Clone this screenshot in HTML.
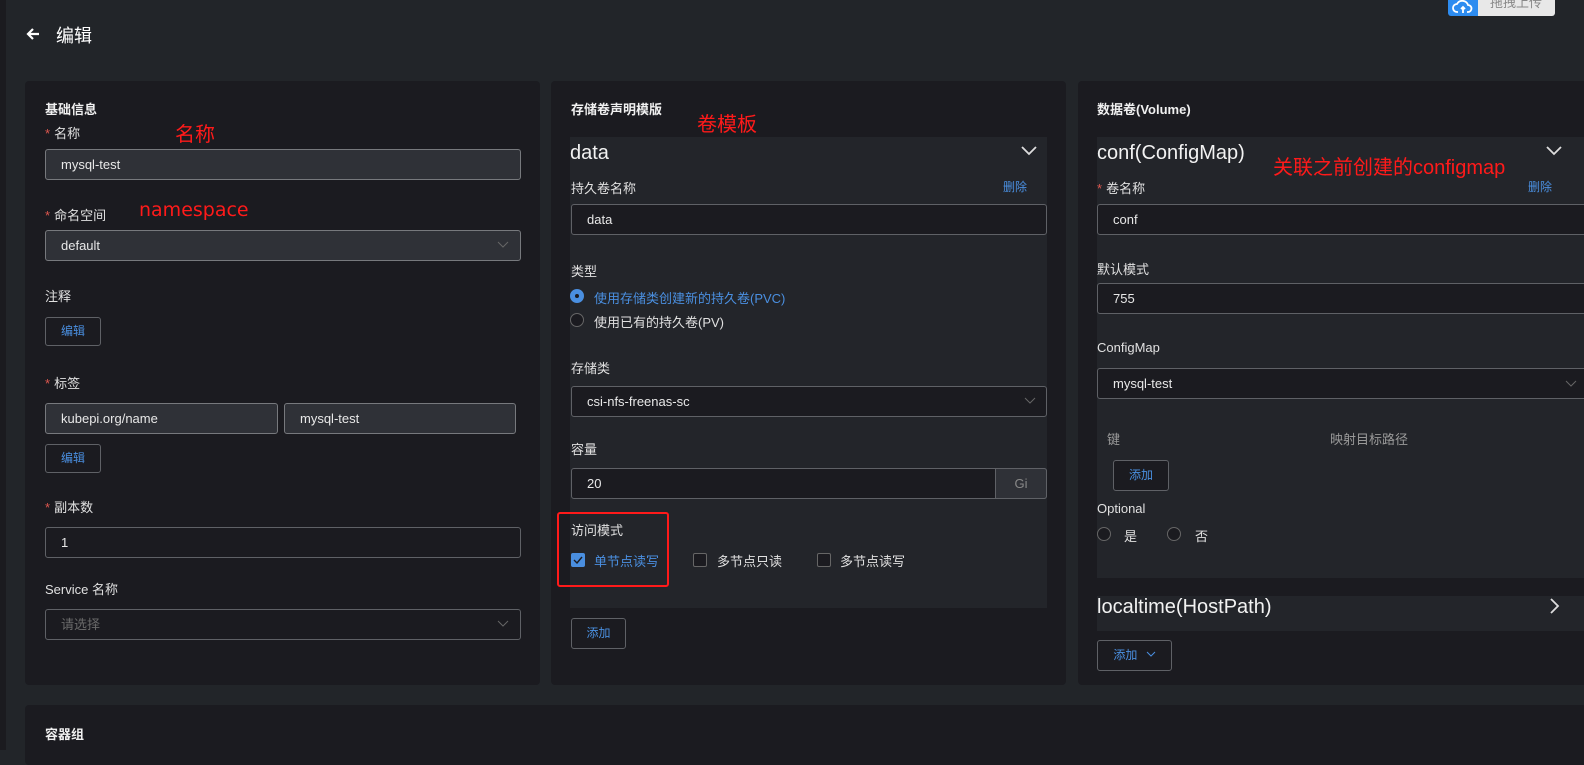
<!DOCTYPE html>
<html><head><meta charset="utf-8"><style>
*{box-sizing:border-box;margin:0;padding:0}
body{width:1584px;height:750px;overflow:hidden;background:#222529;font-family:"Liberation Sans","Noto Sans CJK SC",sans-serif;color:#e6e6e6;font-size:13px;position:relative}
.a{position:absolute;white-space:nowrap}
.panel{position:absolute;background:#1b1b20;border-radius:4px}
.blk{position:absolute;background:#23252a}
.t{font-weight:bold;font-size:13px;color:#f0f0f0}
.lb{font-size:13px;color:#e0e0e0}
.st{color:#e0574f;margin-right:4px}
.in{position:absolute;border:1px solid #5f6166;border-radius:3px;background:#1b1b20;height:31px;padding-left:15px;line-height:29px;font-size:13px;color:#e8e8e8}
.in.l{background:#2f3137;border-color:#77797d}
.btn{position:absolute;border:1px solid #5f6166;border-radius:3px;background:#1b1b20;height:29px;line-height:27px;text-align:center;color:#4a8fe0;font-size:12px}
.blue{color:#4a8fe0}
.red{color:#ff1a1a;font-size:20px}
.rad{position:absolute;width:14px;height:14px;border:1px solid #666;border-radius:50%;background:#1b1b20}
.cb{position:absolute;width:14px;height:14px;border:1px solid #666;border-radius:2px;background:#1b1b20}
.big{font-size:20px;color:#f2f2f2}
</style></head><body>
<div class="a" style="left:0;top:0;width:6px;height:750px;background:#1b1b1f"></div>
<svg class="a" style="left:25px;top:26px" width="16" height="16" viewBox="0 0 16 16"><path d="M14 8H3M8 3L3 8l5 5" stroke="#fff" stroke-width="2.2" fill="none"/></svg>
<div class="a" style="left:56px;top:22px;font-size:18px;color:#fff">编辑</div>
<div class="a" style="left:1448px;top:-4px;width:30px;height:20px;background:#2d8cf0;border-radius:3px 0 0 3px"></div>
<svg class="a" style="left:1452px;top:0" width="22" height="14" viewBox="0 0 22 14"><path d="M6 12H5a4 4 0 0 1 0-8 6 6 0 0 1 11 1 3.5 3.5 0 0 1 0 7h-1M9 9l2-2 2 2M11 7v6" stroke="#fff" stroke-width="1.8" fill="none"/></svg>
<div class="a" style="left:1478px;top:-4px;width:77px;height:20px;background:#e8e8e8;border-radius:0 3px 3px 0;color:#888;font-size:13px;padding-left:12px;line-height:14px">拖拽上传</div>

<div class="panel" style="left:25px;top:81px;width:515px;height:604px"></div>
<div class="panel" style="left:551px;top:81px;width:515px;height:604px"></div>
<div class="panel" style="left:1078px;top:81px;width:520px;height:604px"></div>
<div class="panel" style="left:25px;top:705px;width:1570px;height:60px"></div>

<!-- panel 1 -->
<div class="a t" style="left:45px;top:99px">基础信息</div>
<div class="a lb" style="left:45px;top:123px"><span class="st">*</span>名称</div>
<div class="a red" style="left:175px;top:118px">名称</div>
<div class="in l" style="left:45px;top:149px;width:476px">mysql-test</div>
<div class="a lb" style="left:45px;top:205px"><span class="st">*</span>命名空间</div>
<div class="a red" style="left:139px;top:199px;font-family:'DejaVu Sans',sans-serif;font-size:19px">namespace</div>
<div class="in l" style="left:45px;top:230px;width:476px">default</div>
<svg class="a" style="left:497px;top:241px" width="12" height="8"><path d="M1 1l5 5 5-5" stroke="#666" fill="none"/></svg>
<div class="a lb" style="left:45px;top:286px">注释</div>
<div class="btn" style="left:45px;top:317px;width:56px">编辑</div>
<div class="a lb" style="left:45px;top:373px"><span class="st">*</span>标签</div>
<div class="in l" style="left:45px;top:403px;width:233px">kubepi.org/name</div>
<div class="in l" style="left:284px;top:403px;width:232px">mysql-test</div>
<div class="btn" style="left:45px;top:444px;width:56px">编辑</div>
<div class="a lb" style="left:45px;top:497px"><span class="st">*</span>副本数</div>
<div class="in" style="left:45px;top:527px;width:476px">1</div>
<div class="a lb" style="left:45px;top:579px">Service 名称</div>
<div class="in" style="left:45px;top:609px;width:476px;color:#6a6a6a">请选择</div>
<svg class="a" style="left:497px;top:620px" width="12" height="8"><path d="M1 1l5 5 5-5" stroke="#666" fill="none"/></svg>

<!-- panel 2 -->
<div class="a t" style="left:571px;top:99px">存储卷声明模版</div>
<div class="a red" style="left:697px;top:108px">卷模板</div>
<div class="blk" style="left:570px;top:137px;width:477px;height:471px"></div>
<div class="a big" style="left:570px;top:142px">data</div>
<svg class="a" style="left:1021px;top:146px" width="16" height="10"><path d="M1 1l7 7 7-7" stroke="#ddd" stroke-width="1.8" fill="none"/></svg>
<div class="a lb" style="left:571px;top:178px">持久卷名称</div>
<div class="a blue" style="left:1003px;top:178px;font-size:12px">删除</div>
<div class="in" style="left:571px;top:204px;width:476px">data</div>
<div class="a lb" style="left:571px;top:261px">类型</div>
<div class="rad" style="left:570px;top:289px;background:#4a8fe0;border-color:#4a8fe0"></div>
<div class="a" style="left:575px;top:294px;width:4px;height:4px;border-radius:50%;background:#1b1b20"></div>
<div class="a blue" style="left:594px;top:288px">使用存储类创建新的持久卷(PVC)</div>
<div class="rad" style="left:570px;top:313px"></div>
<div class="a lb" style="left:594px;top:312px">使用已有的持久卷(PV)</div>
<div class="a lb" style="left:571px;top:358px">存储类</div>
<div class="in" style="left:571px;top:386px;width:476px">csi-nfs-freenas-sc</div>
<svg class="a" style="left:1024px;top:397px" width="12" height="8"><path d="M1 1l5 5 5-5" stroke="#666" fill="none"/></svg>
<div class="a lb" style="left:571px;top:439px">容量</div>
<div class="in" style="left:571px;top:468px;width:476px">20</div>
<div class="a" style="left:995px;top:468px;width:52px;height:31px;background:#2f3137;border:1px solid #5f6166;border-radius:0 3px 3px 0;color:#888;text-align:center;line-height:29px">Gi</div>
<div class="a lb" style="left:571px;top:520px">访问模式</div>
<div class="a" style="left:571px;top:553px;width:14px;height:14px;background:#4a8fe0;border-radius:2px"></div>
<svg class="a" style="left:573px;top:556px" width="10" height="8"><path d="M1 4l3 3 5-6" stroke="#1b1b20" stroke-width="1.4" fill="none"/></svg>
<div class="a blue" style="left:594px;top:551px">单节点读写</div>
<div class="cb" style="left:693px;top:553px"></div>
<div class="a lb" style="left:717px;top:551px">多节点只读</div>
<div class="cb" style="left:817px;top:553px"></div>
<div class="a lb" style="left:840px;top:551px">多节点读写</div>
<div class="a" style="left:557px;top:512px;width:112px;height:75px;border:2px solid #ff1a1a;border-radius:3px"></div>
<div class="btn" style="left:571px;top:618px;width:55px;height:31px;line-height:29px">添加</div>

<!-- panel 3 -->
<div class="a t" style="left:1097px;top:99px">数据卷(Volume)</div>
<div class="blk" style="left:1097px;top:137px;width:500px;height:441px"></div>
<div class="a big" style="left:1097px;top:142px">conf(ConfigMap)</div>
<div class="a red" style="left:1273px;top:151px">关联之前创建的configmap</div>
<svg class="a" style="left:1546px;top:146px" width="16" height="10"><path d="M1 1l7 7 7-7" stroke="#ddd" stroke-width="1.8" fill="none"/></svg>
<div class="a lb" style="left:1097px;top:178px"><span class="st">*</span>卷名称</div>
<div class="a blue" style="left:1528px;top:178px;font-size:12px">删除</div>
<div class="in" style="left:1097px;top:204px;width:500px">conf</div>
<div class="a lb" style="left:1097px;top:259px">默认模式</div>
<div class="in" style="left:1097px;top:283px;width:500px">755</div>
<div class="a lb" style="left:1097px;top:340px">ConfigMap</div>
<div class="in" style="left:1097px;top:368px;width:500px">mysql-test</div>
<svg class="a" style="left:1565px;top:380px" width="12" height="8"><path d="M1 1l5 5 5-5" stroke="#666" fill="none"/></svg>
<div class="a" style="left:1107px;top:429px;color:#999">键</div>
<div class="a" style="left:1330px;top:429px;color:#999">映射目标路径</div>
<div class="btn" style="left:1113px;top:460px;width:56px;height:31px;line-height:29px">添加</div>
<div class="a lb" style="left:1097px;top:501px">Optional</div>
<div class="rad" style="left:1097px;top:527px"></div>
<div class="a lb" style="left:1124px;top:526px">是</div>
<div class="rad" style="left:1167px;top:527px"></div>
<div class="a lb" style="left:1195px;top:526px">否</div>
<div class="blk" style="left:1097px;top:596px;width:500px;height:35px"></div>
<div class="a big" style="left:1097px;top:596px">localtime(HostPath)</div>
<svg class="a" style="left:1550px;top:598px" width="10" height="16"><path d="M1 1l7 7-7 7" stroke="#ddd" stroke-width="1.8" fill="none"/></svg>
<div class="btn" style="left:1097px;top:640px;width:75px;height:31px;line-height:29px">添加 <svg width="10" height="7" style="margin-left:5px;vertical-align:1px"><path d="M1 1l4 4 4-4" stroke="#4a8fe0" fill="none"/></svg></div>

<div class="a t" style="left:45px;top:724px">容器组</div>
</body></html>
